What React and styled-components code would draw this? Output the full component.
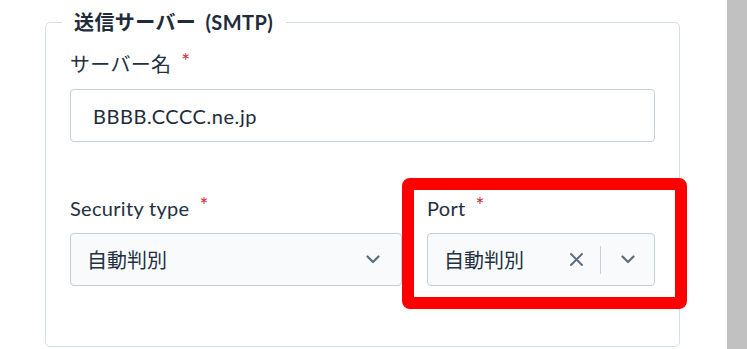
import React from "react";
import styled, { createGlobalStyle } from "styled-components";

const Global = createGlobalStyle`
  html, body { margin: 0; padding: 0; background: #ffffff; }
  body { font-family: Lato, "Noto Sans CJK JP", sans-serif; }
  * { box-sizing: border-box; }
`;

const Page = styled.div`
  position: relative;
  display: flex;
  width: 747px;
  height: 349px;
  overflow: hidden;
  background: #ffffff;
`;

const Main = styled.div`
  flex: 1;
  padding: 10px 47px 0 45px;
`;

const ScrollTrack = styled.div`
  width: 20px;
  flex: none;
  background: #c1c1c1;
`;

const Fieldset = styled.fieldset`
  margin: 0;
  padding: 18px 24px 60px 24px;
  border: 1px solid #d6dde4;
  border-radius: 5px;
  min-width: 0;
`;

const Legend = styled.legend`
  margin-left: -8px;
  padding: 0 13px 0 12px;
  font-family: Lato, "Noto Sans CJK JP", sans-serif;
  font-weight: 700;
  font-size: 20px;
  line-height: 24px;
  word-spacing: 4px;
  letter-spacing: 0.4px;
  color: #1e2b3a;
`;

const Field = styled.div`
  display: flex;
  flex-direction: column;
  gap: 13px;
  min-width: 0;
`;

const Label = styled.label`
  font-family: Lato, "Noto Sans CJK JP", sans-serif;
  font-size: 20px;
  line-height: 24px;
  letter-spacing: 0.3px;
  color: #23303f;
  display: flex;
  align-items: center;
  gap: 10px;
`;

const Required = styled.span`
  color: #c8303c;
  font-size: 21px;
  position: relative;
  top: -3px;
`;

const TextInput = styled.div`
  height: 53px;
  border: 1px solid #c5ced7;
  border-radius: 4px;
  background: #ffffff;
  display: flex;
  align-items: center;
  padding: 0 22px;
  font-size: 20px;
  letter-spacing: 0.55px;
  color: #1e2b3a;
`;

const Row = styled.div`
  margin-top: 54px;
  display: grid;
  grid-template-columns: minmax(0, 332fr) minmax(0, 228fr);
  column-gap: 25px;
`;

const Select = styled.div`
  height: 53px;
  border: 1px solid #c5ced7;
  border-radius: 4px;
  background: #f8fafc;
  display: flex;
  align-items: center;
  padding: 0 ${(p) => p.$padRight}px 0 16px;
`;

const Value = styled.span`
  flex: 1;
  font-size: 20px;
  color: #23303f;
  white-space: nowrap;
`;

const Indicators = styled.div`
  display: flex;
  align-items: center;
`;

const Separator = styled.span`
  width: 1px;
  height: 28px;
  background: #c9cfd5;
  margin: 0 20px 0 17px;
`;

const Icon = styled.svg`
  display: block;
  flex: none;
`;

const Annotation = styled.div`
  position: absolute;
  left: 402px;
  top: 178px;
  width: 285px;
  height: 131px;
  border: 12px solid #ff0000;
  border-radius: 8px;
  pointer-events: none;
`;

const Chevron = () => (
  <Icon width="14" height="9" viewBox="0 0 14 9">
    <path d="M1.5 1.5 L7 7 L12.5 1.5" fill="none" stroke="#5a6c7e" strokeWidth="2.2" strokeLinecap="round" strokeLinejoin="round" />
  </Icon>
);

const Clear = () => (
  <Icon width="13" height="13" viewBox="0 0 13 13">
    <path d="M1 1 L12 12 M12 1 L1 12" fill="none" stroke="#5a6c7e" strokeWidth="1.9" strokeLinecap="round" />
  </Icon>
);

export default function App() {
  return (
    <>
      <Global />
      <Page>
        <Main>
          <Fieldset>
            <Legend>送信サーバー (SMTP)</Legend>
            <Field>
              <Label>
                サーバー名<Required>*</Required>
              </Label>
              <TextInput>BBBB.CCCC.ne.jp</TextInput>
            </Field>
            <Row>
              <Field>
                <Label>
                  Security type<Required>*</Required>
                </Label>
                <Select $padRight={21}>
                  <Value>自動判別</Value>
                  <Chevron />
                </Select>
              </Field>
              <Field>
                <Label>
                  Port<Required>*</Required>
                </Label>
                <Select $padRight={19}>
                  <Value>自動判別</Value>
                  <Indicators>
                    <Clear />
                    <Separator />
                    <Chevron />
                  </Indicators>
                </Select>
              </Field>
            </Row>
          </Fieldset>
        </Main>
        <ScrollTrack />
        <Annotation />
      </Page>
    </>
  );
}
